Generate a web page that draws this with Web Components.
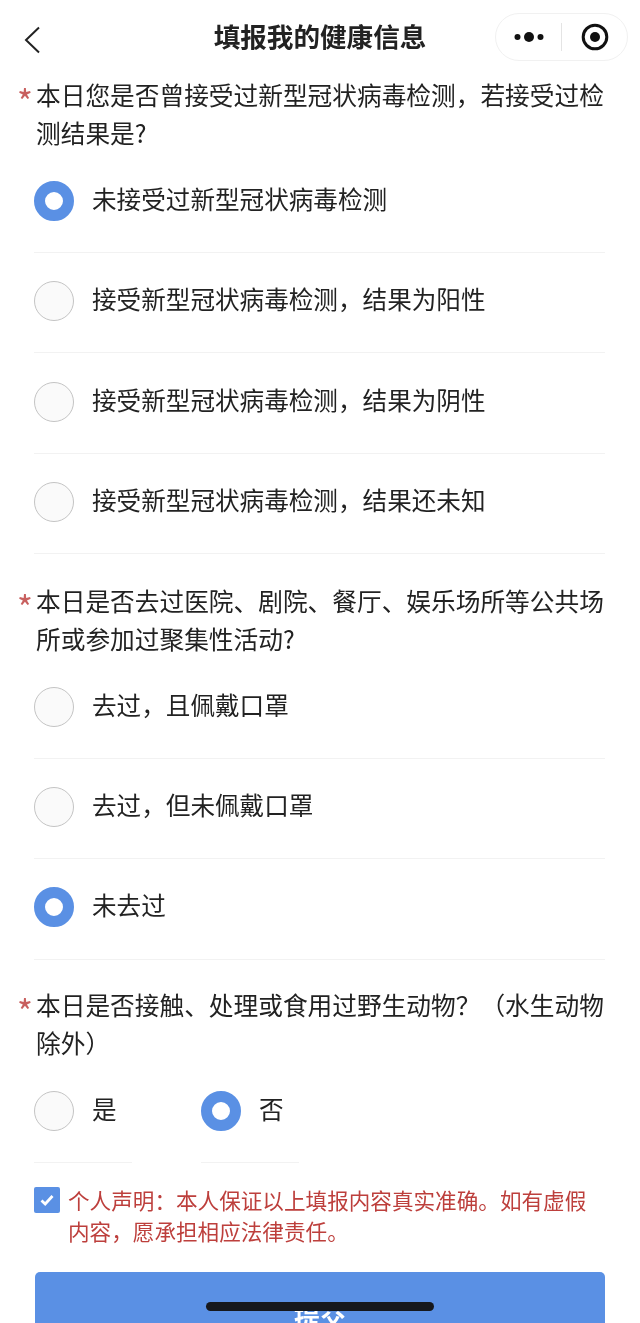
<!DOCTYPE html>
<html lang="zh-CN">
<head>
<meta charset="utf-8">
<title>填报我的健康信息</title>
<style>
html,body{margin:0;padding:0;background:#fff;height:1323px;overflow:hidden}
body{font-family:"Noto Sans CJK SC","Noto Sans",sans-serif;color:#1d1d1d;position:relative;filter:blur(.35px)}
</style>
</head>
<body>
<nav-bar>填报我的健康信息</nav-bar>
<health-form>
  <form-question style="--after:26.6px">
    <span slot="label">本日您是否曾接受过新型冠状病毒检测，若接受过检测结果是?</span>
    <radio-option checked>未接受过新型冠状病毒检测</radio-option>
    <radio-option>接受新型冠状病毒检测，结果为阳性</radio-option>
    <radio-option>接受新型冠状病毒检测，结果为阴性</radio-option>
    <radio-option>接受新型冠状病毒检测，结果还未知</radio-option>
  </form-question>
  <form-question style="--after:25.5px">
    <span slot="label">本日是否去过医院、剧院、餐厅、娱乐场所等公共场所或参加过聚集性活动?</span>
    <radio-option>去过，且佩戴口罩</radio-option>
    <radio-option>去过，但未佩戴口罩</radio-option>
    <radio-option checked>未去过</radio-option>
  </form-question>
  <form-question inline style="--after:0px">
    <span slot="label">本日是否接触、处理或食用过野生动物？（水生动物除外）</span>
    <radio-option>是</radio-option>
    <radio-option checked>否</radio-option>
  </form-question>
  <consent-row>个人声明：本人保证以上填报内容真实准确。如有虚假内容，愿承担相应法律责任。</consent-row>
  <submit-button>提交</submit-button>
</health-form>
<home-bar></home-bar>
<script>
function def(name, css, html, setup){
  customElements.define(name, class extends HTMLElement{
    constructor(){super();const r=this.attachShadow({mode:'open'});r.innerHTML='<style>'+css+'</style>'+html;}
    connectedCallback(){if(setup)setup(this);}
  });
}
def('nav-bar',`
:host{display:flex;align-items:center;justify-content:center;position:relative;height:75px;box-sizing:border-box;padding-bottom:3px}
.title{font-size:26.6px;font-weight:700;color:#222;line-height:1}
.back{position:absolute;left:24px;top:26px;width:18px;height:28px}
.cap{position:absolute;left:495px;top:13px;width:133px;height:48px;box-sizing:border-box;border:1px solid #f1f1f1;border-radius:24px;display:flex;align-items:center}
.side{flex:1;display:flex;align-items:center;justify-content:center}
.sep{width:1px;height:28px;background:#e4e4e4}
`,`
<svg class="back" viewBox="0 0 18 28"><path d="M15 1.5 2 14l13 12.5" fill="none" stroke="#222" stroke-width="2"/></svg>
<div class="title"><slot></slot></div>
<div class="cap">
  <div class="side"><svg width="36" height="12" viewBox="0 0 36 12"><circle cx="6.5" cy="6" r="3" fill="#111"/><circle cx="18" cy="6" r="5" fill="#111"/><circle cx="29.5" cy="6" r="3" fill="#111"/></svg></div>
  <div class="sep"></div>
  <div class="side"><svg width="28" height="28" viewBox="0 0 28 28"><circle cx="14" cy="14" r="11.8" fill="none" stroke="#111" stroke-width="3"/><circle cx="14" cy="14" r="5" fill="#111"/></svg></div>
</div>`);
def('health-form',`:host{display:block}`,`<slot></slot>`);
def('form-question',`
:host{display:block;padding:0 35px var(--after,27px) 19px}
.q{display:flex;font-size:24.7px;line-height:38px;color:#222}
.star{flex:0 0 19px;margin-left:-2px;height:38px;color:#c8605f;font-size:34px;line-height:52px;font-weight:400}
.opts{display:block;margin-left:15px;padding-top:1.6px}
:host([inline]) .opts{display:flex;gap:69px;padding-top:2px}
`,`
<div class="q"><span class="star">*</span><span><slot name="label"></slot></span></div>
<div class="opts"><slot></slot></div>`,
el=>{ if(el.hasAttribute('inline')) el.querySelectorAll('radio-option').forEach(o=>o.setAttribute('compact','')); });
def('radio-option',`
:host{display:flex;align-items:center;height:100.4px;box-sizing:border-box;border-bottom:1px solid #f2f2f2;padding-bottom:3px;gap:18px;font-size:24.6px;color:#222}
:host([compact]){width:98px;white-space:nowrap}
.r{flex:none;width:40px;height:40px;box-sizing:border-box;border-radius:50%;border:1.5px solid #c4c4c4;background:#fafafa}
:host([checked]) .r{border:11.5px solid #5a90e4;background:#fff}
.t{margin-bottom:6px}
`,`<span class="r"></span><span class="t"><slot></slot></span>`);
def('consent-row',`
:host{display:flex;align-items:flex-start;gap:8px;padding:23px 35px 0 34px;font-size:21.6px;line-height:31px;color:#bd3f3c}
.c{flex:none;width:26px;height:26px;background:#5a90e4;border-radius:2px;margin-top:1px;display:flex;align-items:center;justify-content:center}
.t{margin-top:-2px}
`,`<span class="c"><svg width="18" height="16" viewBox="0 0 18 16"><path d="M3.5 8.5 7.2 12 14.5 4" fill="none" stroke="#fff" stroke-width="2.8"/></svg></span><span class="t"><slot></slot></span>`);
def('submit-button',`
:host{display:flex;justify-content:center;align-items:center;margin:26px 35px 0 35px;height:86px;box-sizing:border-box;background:#5a90e4;border-radius:5px;color:#fff;font-size:26px;font-weight:700}
`,`<slot></slot>`);
def('home-bar',`
:host{display:block;position:absolute;left:206px;top:1302px;width:228px;height:9px;border-radius:5px;background:#16181d}
`,``);
</script>
</body>
</html>
